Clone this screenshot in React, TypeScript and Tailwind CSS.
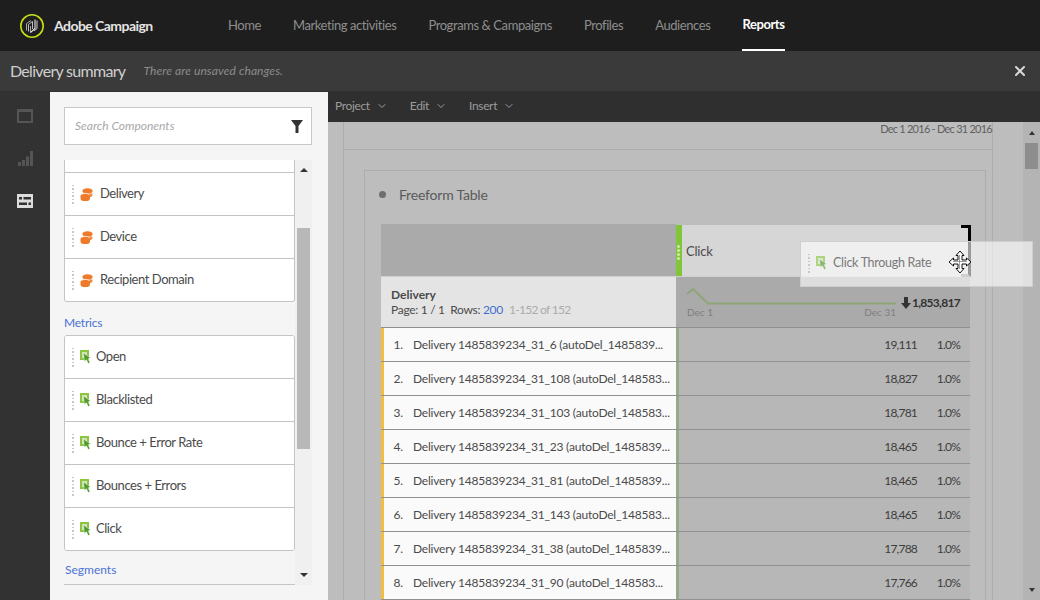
import { ChevronDown, X } from 'lucide-react'

const NAV = ['Home', 'Marketing activities', 'Programs & Campaigns', 'Profiles', 'Audiences', 'Reports']

const ROWS = [
  { name: 'Delivery 1485839234_31_6 (autoDel_1485839...', count: '19,111' },
  { name: 'Delivery 1485839234_31_108 (autoDel_148583...', count: '18,827' },
  { name: 'Delivery 1485839234_31_103 (autoDel_148583...', count: '18,781' },
  { name: 'Delivery 1485839234_31_23 (autoDel_1485839...', count: '18,465' },
  { name: 'Delivery 1485839234_31_81 (autoDel_1485839...', count: '18,465' },
  { name: 'Delivery 1485839234_31_143 (autoDel_148583...', count: '18,465' },
  { name: 'Delivery 1485839234_31_38 (autoDel_1485839...', count: '17,788' },
  { name: 'Delivery 1485839234_31_90 (autoDel_148583...', count: '17,766' },
]

function Logo() {
  return (
    <svg width="26" height="26" viewBox="0 0 26 26" fill="none">
      <circle cx="13" cy="13" r="11.2" stroke="#c8dc14" strokeWidth="1.6" />
      <path d="M7.500 17.500V10.500L12 7.500" stroke="#a8a8a8" strokeWidth="1" />
      <path d="M9.500 18.500V11.500L13.500 8.500V16" stroke="#c0c0c0" strokeWidth="1" />
      <path d="M11.500 19.500V13" stroke="#a8a8a8" strokeWidth="1" />
      <path d="M16 6.500V15.500L11.500 19.500" stroke="#e8e8e8" strokeWidth="1.100" />
      <path d="M18 7.500V15.500L15 18" stroke="#d0d0d0" strokeWidth="1" />
    </svg>
  )
}

function Grip({ className = '' }: { className?: string }) {
  return (
    <div className={`flex flex-col gap-[2px] ${className}`}>
      {[0, 1, 2, 3, 4, 5].map((i) => (
        <span key={i} className="w-[2px] h-[1.5px] bg-[#c8c8c8]" />
      ))}
    </div>
  )
}

function DimensionIcon() {
  return (
    <svg width="13" height="13" viewBox="0 0 13 13" className="shrink-0">
      <ellipse cx="7.500" cy="3" rx="5.200" ry="2.800" fill="#ee7a2c" />
      <path d="M9 5.500h3.500v1.500c0 1.200-1.300 2-3 2.200z" fill="#f08a3c" />
      <rect x="0.500" y="5.500" width="9.500" height="7.500" rx="3" fill="#ee7a2c" />
      <path d="M1.500 6.500C4 4.800 7.500 5 9.500 6.800" stroke="#ffffff" strokeWidth="0.800" fill="none" />
    </svg>
  )
}

function MetricIcon({ faded = false }: { faded?: boolean }) {
  return (
    <svg width="11" height="14" viewBox="0 0 11 14" className="shrink-0" opacity={faded ? 0.65 : 1}>
      <rect x="0" y="0" width="9" height="10" fill="#8cc63f" />
      <rect x="2" y="2" width="5" height="6" fill="#d5e0c0" />
      <path d="M3.500 3 10.500 8 8 8.800l2 3.700-1.700 1-2-3.900L4.500 11.500z" fill="#4f9a2c" stroke="#ffffff" strokeWidth="0.400" />
    </svg>
  )
}

function ListRow({ icon, label, last = false }: { icon: 'dim' | 'metric'; label: string; last?: boolean }) {
  return (
    <div className={`flex items-center shrink-0 bg-white pl-[7px] ${last ? 'h-[42px]' : 'h-[43px] border-b border-[#c4c4c4]'}`}>
      <Grip className="mr-[6px]" />
      {icon === 'dim' ? <DimensionIcon /> : <MetricIcon />}
      <span className={`text-[13px] tracking-[-0.45px] text-[#4b4b4b] ${icon === 'dim' ? 'ml-[7px]' : 'ml-[5px]'}`}>{label}</span>
    </div>
  )
}

function Rail() {
  return (
    <div className="w-[50px] bg-[#323232] flex flex-col items-center shrink-0 pt-[17px]">
      <div className="w-[16px] h-[14px] border-2 border-t-[3px] border-[#555555]" />
      <svg width="15" height="15" viewBox="0 0 15 15" className="mt-[28px]">
        <path d="M0 11h3v4H0zM4 9h3v6H4zM8 5.500h3V15H8zM12 0h3v15h-3z" fill="#555555" />
      </svg>
      <svg width="16" height="14" viewBox="0 0 16 14" className="mt-[28px]">
        <path d="M0 0h16v14H0z" fill="#dcdcdc" />
        <path d="M2 3h12v2.500H2zM2 8.500h12V11H2z" fill="#323232" />
        <path d="M5 2h1.500v4H5zM10 7.500h1.500v4H10z" fill="#dcdcdc" />
      </svg>
    </div>
  )
}

function ComponentPanel() {
  return (
    <div className="w-[278px] bg-[#f5f5f5] shrink-0 pt-[15px] pl-[14px] pr-[16px]">
      <div className="h-[38px] bg-white border border-[#c8c8c8] flex items-center justify-between pl-[10px] pr-[8px]">
        <span className="text-[12px] italic text-[#a8a8a8]">Search Components</span>
        <svg width="12" height="13" viewBox="0 0 12 13">
          <path d="M0 0h12L7.500 6v7h-3V6z" fill="#333333" />
        </svg>
      </div>
      <div className="flex mt-[15px] h-[425px]">
        <div className="w-[231px] overflow-hidden flex flex-col">
          <div className="h-[13px] bg-white border-x border-b border-[#c4c4c4] shrink-0" />
          <div className="border-x border-b border-[#c4c4c4] rounded-b-[3px] flex flex-col shrink-0 overflow-hidden">
            <ListRow icon="dim" label="Delivery" />
            <ListRow icon="dim" label="Device" />
            <ListRow icon="dim" label="Recipient Domain" last />
          </div>
          <div className="text-[12px] tracking-[-0.2px] text-[#4a72d4] h-[33px] pt-[13px] leading-[16px] shrink-0">Metrics</div>
          <div className="border border-[#c4c4c4] rounded-[3px] flex flex-col shrink-0 overflow-hidden">
            <ListRow icon="metric" label="Open" />
            <ListRow icon="metric" label="Blacklisted" />
            <ListRow icon="metric" label="Bounce + Error Rate" />
            <ListRow icon="metric" label="Bounces + Errors" />
            <ListRow icon="metric" label="Click" last />
          </div>
          <div className="text-[12px] text-[#4a72d4] h-[34px] pt-[11px] pl-[1px] leading-[16px] border-b border-[#c4c4c4] shrink-0">Segments</div>
        </div>
        <div className="w-[17px] bg-[#f0f0f0] flex flex-col items-center relative">
          <span className="mt-[8px] w-0 h-0 border-x-[4px] border-x-transparent border-b-[4px] border-b-[#333333]" />
          <span className="mt-[56px] w-[13px] h-[221px] bg-[#b8b8b8]" />
          <span className="absolute bottom-[8px] w-0 h-0 border-x-[4px] border-x-transparent border-t-[4px] border-t-[#333333]" />
        </div>
      </div>
    </div>
  )
}

function Sparkline() {
  return (
    <svg width="210" height="18" viewBox="0 0 210 18" fill="none" className="block">
      <path d="M0 7 6 2 21 16.500H209" stroke="#8fa578" strokeWidth="2" />
    </svg>
  )
}

function FreeformTable() {
  return (
    <div className="ml-[16px] mr-[15px] flex flex-col">
      <div className="flex h-[52px]">
        <div className="w-[295px] bg-[#aaaaaa]" />
        <div className="flex-1 relative flex items-center bg-[#d6d6d6] border-l-[6px] border-[#80c638] pl-[4px] pt-[2px] mt-[1px]">
          <span className="text-[13px] tracking-[-0.2px] text-[#4b4b4b]">Click</span>
          <div className="absolute left-[-5px] top-[20px] flex flex-col gap-[1px]">
            {[0, 1, 2, 3].map((i) => (
              <span key={i} className="w-[3px] h-[3px] rounded-full bg-[#cfe8b0]" />
            ))}
          </div>
        </div>
      </div>
      <div className="flex h-[52px] border-t border-[#d0d0d0] border-b border-b-[#8f8f8f]">
        <div className="w-[295px] bg-[#e4e4e4] pl-[10px] pt-[10px] leading-[16px]">
          <div className="text-[12px] font-bold text-[#4b4b4b]">Delivery</div>
          <div className="text-[12px] tracking-[-0.3px] text-[#4b4b4b] whitespace-nowrap -mt-[1px]">
            Page: 1 / 1&nbsp; Rows: <span className="text-[#3f6fd0]">200</span>
            <span className="text-[#ababab] ml-[6px] tracking-[-0.7px]">1-152 of 152</span>
          </div>
        </div>
        <div className="flex-1 bg-[#aaaaaa] pl-[11px] pt-[10px] relative">
          <Sparkline />
          <div className="flex justify-between w-[209px] text-[10px] text-[#7f7f7f] leading-[12px] mt-[1px]">
            <span>Dec 1</span>
            <span>Dec 31</span>
          </div>
          <div className="absolute right-[10px] top-[18px] flex items-center text-[12px] tracking-[-0.7px] font-bold text-[#333333] leading-[16px]">
            <svg width="10" height="12" viewBox="0 0 10 12" className="mr-[1px]">
              <path d="M3 0h4v6h3l-5 6-5-6h3z" fill="#333333" />
            </svg>
            1,853,817
          </div>
        </div>
      </div>
      {ROWS.map((row, i) => (
        <div key={row.name} className="flex h-[34px] border-b border-[#919191]">
          <div className="w-[295px] bg-[#fafafa] border-l-[3px] border-[#f4bd41] flex items-center text-[12px] tracking-[-0.2px] text-[#4b4b4b] whitespace-nowrap">
            <span className="w-[19px] text-right shrink-0">{i + 1}.</span>
            <span className="ml-[10px]">{row.name}</span>
          </div>
          <div className="flex-1 bg-[#b7b7b7] border-l-[3px] border-[#96a886] flex items-center justify-end text-[12px] tracking-[-0.8px] text-[#3d3d3d]">
            <span>{row.count}</span>
            <span className="w-[34px] ml-[9px] text-right mr-[10px]">1.0%</span>
          </div>
        </div>
      ))}
    </div>
  )
}

function MoveCursor() {
  return (
    <svg width="24" height="24" viewBox="0 0 24 24">
      <path
        d="M12 1 16 5.500H14V10H18.500V8L23 12 18.500 16V14H14V18.500H16L12 23 8 18.500H10V14H5.500V16L1 12 5.500 8V10H10V5.500H8Z"
        fill="#ffffff"
        stroke="#111111"
        strokeWidth="1"
      />
      <path d="M11.500 5v14M5 11.500h14" stroke="#777777" strokeWidth="0.7" />
    </svg>
  )
}

export default function App() {
  return (
    <div className="w-[1040px] h-[600px] overflow-hidden relative flex flex-col bg-[#1e1e1e]" style={{ fontFamily: 'Lato, "Open Sans", sans-serif' }}>
      {/* Top nav */}
      <div className="h-[51px] shrink-0 flex items-center bg-[#1e1e1e]">
        <div className="ml-[19px] w-[209px] flex items-center gap-[9px]">
          <Logo />
          <span className="text-[14px] tracking-[-0.55px] font-bold text-[#e4e4e4]">Adobe Campaign</span>
        </div>
        <div className="flex gap-[32px] h-full">
          {NAV.map((item) => (
            <div
              key={item}
              className={`flex items-center text-[13px] tracking-[-0.42px] ${item === 'Reports' ? 'font-bold text-white border-b-2 border-white' : 'text-[#8e8e8e]'}`}
            >
              {item}
            </div>
          ))}
        </div>
      </div>

      {/* Title bar */}
      <div className="h-[41px] shrink-0 bg-[#3a3a3a] flex items-center pl-[10px] pr-[12px] border-b border-[#303030]">
        <span className="text-[16px] tracking-[-0.7px] text-[#cfcfcf]">Delivery summary</span>
        <span className="text-[12px] tracking-[0.1px] italic text-[#8c8c8c] ml-[18px]">There are unsaved changes.</span>
        <X className="ml-auto text-[#d8d8d8]" size={16} strokeWidth={3} />
      </div>

      <div className="flex-1 flex min-h-0">
        <Rail />
        <ComponentPanel />

        <div className="flex-1 flex flex-col min-w-0">
          {/* Toolbar */}
          <div className="h-[30px] shrink-0 bg-[#2f2f2f] flex items-center pl-[7px] pb-[2px] gap-[22px]">
            {['Project', 'Edit', 'Insert'].map((item) => (
              <div key={item} className="flex items-center gap-[6px] text-[12px] tracking-[-0.35px] text-[#9c9c9c]">
                {item}
                <ChevronDown size={12} strokeWidth={2} />
              </div>
            ))}
          </div>

          <div className="flex-1 flex bg-[#bdbdbd] min-h-0">
            <div className="flex-1 pl-[15px] pr-[30px] min-w-0">
              <div className="h-full border-x border-[#acacac] flex flex-col">
                <div className="h-[28px] shrink-0 border-b border-[#acacac] text-right pt-0 text-[11px] tracking-[-0.75px] text-[#5f5f5f] leading-[14px]">
                  Dec 1 2016 - Dec 31 2016
                </div>
                <div className="mt-[20px] ml-[20px] mr-[6px] flex-1 border border-b-0 border-[#acacac] flex flex-col min-h-0">
                  <div className="h-[53px] shrink-0 flex items-center pb-[6px] pl-[14px] gap-[13px]">
                    <span className="w-[7px] h-[7px] rounded-full bg-[#6e6e6e]" />
                    <span className="text-[14px] tracking-[-0.2px] text-[#5a5a5a]">Freeform Table</span>
                  </div>
                  <FreeformTable />
                </div>
              </div>
            </div>
            <div className="w-[17px] shrink-0 bg-[#b4b4b4] flex flex-col items-center relative">
              <span className="mt-[9px] w-0 h-0 border-x-[3.500px] border-x-transparent border-b-[4px] border-b-[#333333]" />
              <span className="mt-[8px] w-[13px] h-[26px] bg-[#8d8d8d]" />
              <span className="absolute bottom-[8px] w-0 h-0 border-x-[3.500px] border-x-transparent border-t-[4px] border-t-[#333333]" />
            </div>
          </div>
        </div>
      </div>

      {/* Drop target bracket */}
      <div className="absolute left-[961px] top-[225px] w-[10px] h-[52px] border-t-[3px] border-r-[3px] border-b-[3px] border-t-black border-r-black border-b-[#8a8a8a]" />

      {/* Dragged component */}
      <div className="absolute left-[800px] top-[241px] w-[233px] h-[46px] bg-white/60 border border-[#cfcfcf] flex items-center pl-[7px] pb-[2px]">
        <Grip />
        <span className="ml-[6px]"><MetricIcon faded /></span>
        <span className="ml-[6px] text-[12.500px] tracking-[-0.3px] text-[#7a7a7a]">Click Through Rate</span>
      </div>
      <div className="absolute left-[948px] top-[250px]">
        <MoveCursor />
      </div>
    </div>
  )
}
